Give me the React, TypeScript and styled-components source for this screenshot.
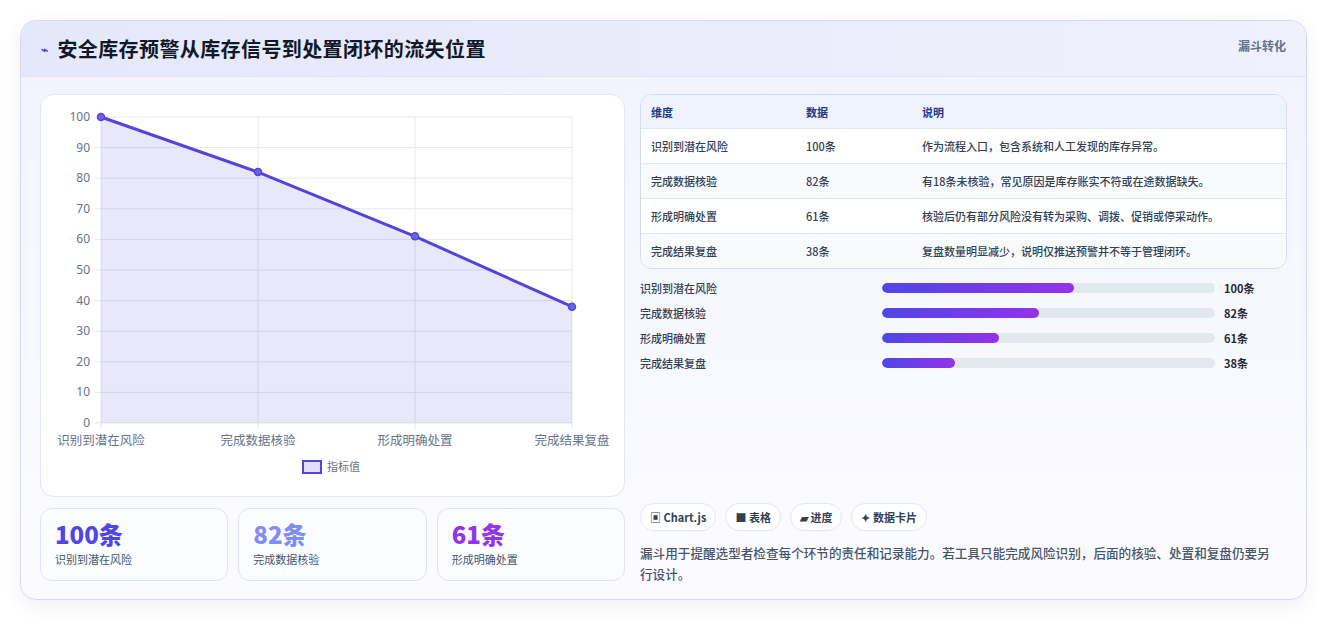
import styled, { createGlobalStyle } from "styled-components";

const Global = createGlobalStyle`
  body { margin: 0; background: #f3f4f6; font-family: "Noto Sans CJK SC", "Noto Sans", sans-serif; color: #1f2937; }
`;

const Page = styled.div`
  width: 1327px; height: 621px; box-sizing: border-box; padding: 20px 20px 0 20px; background: #fff;
`;

const Card = styled.div`
  height: 580px; box-sizing: border-box; border: 1px solid #d6daf3; border-radius: 16px; overflow: hidden;
  background: linear-gradient(180deg, #f1f2fd 0%, #f8f9ff 60%, #fbfbff 100%);
  box-shadow: 0 6px 18px rgba(80, 80, 140, 0.08);
`;

const Header = styled.div`
  height: 55px; display: flex; align-items: center; justify-content: space-between; padding: 0 20px;
  background: linear-gradient(90deg, #e5e7fb 0%, #eceefc 70%, #f1f0fd 100%);
  border-bottom: 1px solid #e3e5f5;
`;

const Title = styled.h1`
  margin: 0; font-size: 20px; font-weight: 700; color: #111827; display: flex; align-items: center; gap: 9px;
  letter-spacing: 0.4px;
  span { color: #4f46e5; font-size: 12px; }
`;

const HeaderTag = styled.div`
  font-size: 12px; color: #64748b; font-weight: 600; align-self: flex-start; margin-top: 16px;
`;

const Body = styled.div`
  display: grid; grid-template-columns: 585px 647px; gap: 15px; padding: 17px 19px 0 19px;
`;

const Col = styled.div`
  display: flex; flex-direction: column; height: 490px;
`;

const ChartCard = styled.div`
  height: 403px; box-sizing: border-box; background: #fff; border: 1px solid #e3e6f3; border-radius: 14px;
`;

const Stats = styled.div`
  display: grid; grid-template-columns: repeat(3, 1fr); gap: 10px; margin-top: 11px;
`;

const Stat = styled.div`
  height: 73px; box-sizing: border-box; border: 1px solid #dfe3f5; border-radius: 12px; background: #fbfcff;
  padding: 10px 14px;
`;

const StatNum = styled.div<{ $c: string }>`
  font-size: 24px; font-weight: 800; color: ${p => p.$c}; line-height: 30px;
`;

const StatLabel = styled.div`
  font-size: 11px; color: #475569; margin-top: 2px;
`;

const Table = styled.div`
  border: 1px solid #d3dbef; border-radius: 12px; overflow: hidden; background: #fff;
`;

const Row = styled.div<{ $head?: boolean; $alt?: boolean }>`
  display: grid; grid-template-columns: 155px 116px 1fr; align-items: center; padding: 0 10px;
  box-sizing: border-box; height: ${p => (p.$head ? 33 : 35)}px; font-size: 11px;
  background: ${p => (p.$head ? "#eef3fd" : p.$alt ? "#f8fafc" : "#fff")};
  color: ${p => (p.$head ? "#1e3a8a" : "#334155")}; font-weight: ${p => (p.$head ? 700 : 500)};
  border-top: ${p => (p.$head ? "none" : "1px solid #e2e8f0")};
`;

const Bars = styled.div`
  display: flex; flex-direction: column; gap: 7px; margin-top: 10px;
`;

const BarRow = styled.div`
  display: grid; grid-template-columns: 242px 333px 1fr; align-items: center; height: 18px;
  font-size: 11px; color: #334155; font-weight: 500;
`;

const Track = styled.div`
  height: 10px; border-radius: 5px; background: #e2e8f0; overflow: hidden;
`;

const Fill = styled.div`
  height: 100%; border-radius: 5px; background: linear-gradient(90deg, #4f46e5, #9333ea);
`;

const BarVal = styled.div`
  padding-left: 9px; font-weight: 700; color: #1f2937;
`;

const Tags = styled.div`
  display: flex; gap: 9px; margin-top: auto;
`;

const Tag = styled.div`
  height: 28px; box-sizing: border-box; padding: 0 9px; border: 1px solid #e2e8f0; border-radius: 14px;
  background: #fff; font-size: 11px; font-weight: 600; color: #334155; display: flex; align-items: center;
`;

const Note = styled.p`
  margin: 11px 0 0; font-size: 12.6px; line-height: 21px; color: #475569; font-weight: 500; padding-right: 8px;
`;

const data = [
  { k: "识别到潜在风险", v: 100, d: "作为流程入口，包含系统和人工发现的库存异常。" },
  { k: "完成数据核验", v: 82, d: "有18条未核验，常见原因是库存账实不符或在途数据缺失。" },
  { k: "形成明确处置", v: 61, d: "核验后仍有部分风险没有转为采购、调拨、促销或停采动作。" },
  { k: "完成结果复盘", v: 38, d: "复盘数量明显减少，说明仅推送预警并不等于管理闭环。" },
];

function Chart() {
  const x0 = 60, x1 = 531, yb = 328, h = 306;
  const px = (i: number) => x0 + (i * (x1 - x0)) / 3;
  const py = (v: number) => yb - (v / 100) * h;
  const pts = data.map((d, i) => `${px(i)},${py(d.v)}`).join(" ");
  return (
    <svg width="583" height="401" fontFamily="Noto Sans, sans-serif">
      {Array.from({ length: 11 }, (_, i) => i * 10).map(v => (
        <g key={v}>
          <line x1={x0 - 6} x2={x1} y1={py(v)} y2={py(v)} stroke="#e5e7eb" />
          <text x={x0 - 11} y={py(v) + 4} fontSize="12" fill="#64748b" textAnchor="end">{v}</text>
        </g>
      ))}
      {data.map((_, i) => (
        <line key={i} x1={px(i)} x2={px(i)} y1={py(100)} y2={yb + 6} stroke="#e5e7eb" />
      ))}
      <polygon points={`${x0},${yb} ${pts} ${x1},${yb}`} fill="rgba(99,88,220,0.14)" />
      <polyline points={pts} fill="none" stroke="#5443dc" strokeWidth="3" />
      {data.map((d, i) => (
        <circle key={i} cx={px(i)} cy={py(d.v)} r="3.5" fill="#6d62e6" stroke="#5443dc" strokeWidth="1.5" />
      ))}
      {data.map((d, i) => (
        <text key={d.k} x={px(i)} y={350} fontSize="12.5" fill="#64748b" textAnchor="middle"
          fontFamily="Noto Sans CJK SC, sans-serif">{d.k}</text>
      ))}
      <rect x="262" y="366" width="18" height="12" fill="rgba(99,88,220,0.2)" stroke="#5443dc" strokeWidth="2" />
      <text x="286" y="376" fontSize="11" fill="#64748b" fontFamily="Noto Sans CJK SC, sans-serif">指标值</text>
    </svg>
  );
}

export default function App() {
  return (
    <Page>
      <Global />
      <Card>
        <Header>
          <Title><span>⌁</span>安全库存预警从库存信号到处置闭环的流失位置</Title>
          <HeaderTag>漏斗转化</HeaderTag>
        </Header>
        <Body>
          <Col>
            <ChartCard><Chart /></ChartCard>
            <Stats>
              <Stat><StatNum $c="#4f46e5">100条</StatNum><StatLabel>识别到潜在风险</StatLabel></Stat>
              <Stat><StatNum $c="#818cf8">82条</StatNum><StatLabel>完成数据核验</StatLabel></Stat>
              <Stat><StatNum $c="#9333ea">61条</StatNum><StatLabel>形成明确处置</StatLabel></Stat>
            </Stats>
          </Col>
          <Col>
            <Table>
              <Row $head><div>维度</div><div>数据</div><div>说明</div></Row>
              {data.map((d, i) => (
                <Row key={d.k} $alt={i % 2 === 1}><div>{d.k}</div><div>{d.v}条</div><div>{d.d}</div></Row>
              ))}
            </Table>
            <Bars>
              {data.map(d => (
                <BarRow key={d.k}>
                  <div>{d.k}</div>
                  <Track><Fill style={{ width: `${d.v * 0.576}%` }} /></Track>
                  <BarVal>{d.v}条</BarVal>
                </BarRow>
              ))}
            </Bars>
            <Tags>
              <Tag>▣ Chart.js</Tag>
              <Tag>■ 表格</Tag>
              <Tag>▰ 进度</Tag>
              <Tag>✦ 数据卡片</Tag>
            </Tags>
            <Note>漏斗用于提醒选型者检查每个环节的责任和记录能力。若工具只能完成风险识别，后面的核验、处置和复盘仍要另行设计。</Note>
          </Col>
        </Body>
      </Card>
    </Page>
  );
}
